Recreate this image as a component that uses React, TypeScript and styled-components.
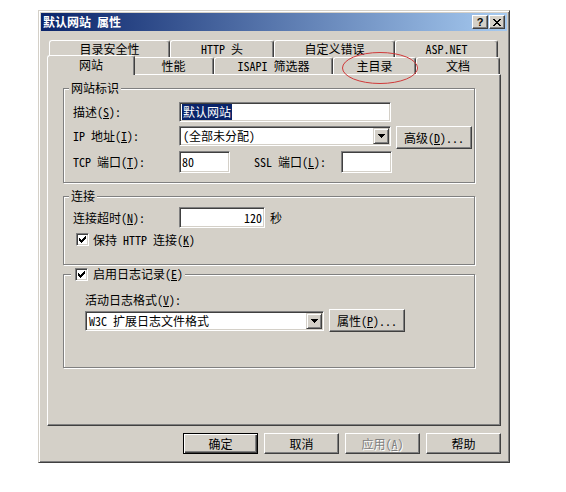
import React from 'react';
import styled, { createGlobalStyle, css } from 'styled-components';

const FACE = '#d4d0c8';
const FONT = `"Noto Sans Mono CJK SC", "Noto Sans CJK SC", "Liberation Sans", sans-serif`;

const GlobalStyle = createGlobalStyle`
  html, body { margin: 0; padding: 0; background: #fff; }
  body { font-family: ${FONT}; font-size: 12px; line-height: 14px; color: #000; }
`;

const Page = styled.div`
  width: 566px;
  height: 492px;
  box-sizing: border-box;
  padding: 10px 0 0 38px;
`;

const Dialog = styled.div`
  width: 472px;
  height: 453px;
  box-sizing: border-box;
  background: ${FACE};
  border: 1px solid;
  border-color: ${FACE} #404040 #404040 ${FACE};
  box-shadow: inset 1px 1px #fff, inset -1px -1px #808080;
  padding: 2px;
  display: flex;
  flex-direction: column;
`;

const TitleBar = styled.div`
  flex: none;
  height: 18px;
  display: flex;
  align-items: center;
  gap: 1px;
  padding-right: 2px;
  background: linear-gradient(to right, #0a246a, #a6caf0);
  color: #fff;
`;

const TitleText = styled.div`
  flex: 1;
  padding-left: 2px;
  font-weight: bold;
  line-height: 18px;
`;

const CaptionButton = styled.div`
  width: 16px;
  height: 14px;
  box-sizing: border-box;
  background: ${FACE};
  border: 1px solid;
  border-color: #fff #404040 #404040 #fff;
  box-shadow: inset -1px -1px #808080;
  display: flex;
  align-items: center;
  justify-content: center;
  color: #000;
  font-family: "Liberation Sans", sans-serif;
  font-weight: bold;
  font-size: 11px;
  line-height: 12px;
`;

const Body = styled.div`
  flex: 1;
  display: flex;
  flex-direction: column;
  padding: 9px 6px 6px;
`;

const TabStrip = styled.div`
  flex: none;
  height: 34px;
  display: flex;
  flex-direction: column;
`;

const TabRow = styled.div`
  height: 17px;
  display: flex;
  align-items: flex-start;
  padding-left: 2px;
`;

const Tab = styled.div<{ $w: number; $active?: boolean }>`
  position: relative;
  flex: none;
  width: ${p => p.$w}px;
  height: 17px;
  box-sizing: border-box;
  background: ${FACE};
  border-top: 1px solid #fff;
  border-left: 1px solid #fff;
  border-right: 1px solid #404040;
  border-radius: 3px 3px 0 0;
  box-shadow: inset -1px 0 #808080;
  display: flex;
  align-items: center;
  justify-content: center;
  white-space: nowrap;
  ${p =>
    p.$active &&
    css`
      width: ${p.$w + 4}px;
      height: 20px;
      margin: -2px -2px 0;
      padding-bottom: 1px;
      z-index: 2;
    `}
`;

const Ring = styled.svg`
  position: absolute;
  left: 6px;
  top: -8px;
  z-index: 3;
  overflow: visible;
  pointer-events: none;
`;

const Panel = styled.div`
  flex: none;
  height: 352px;
  box-sizing: border-box;
  border: 1px solid;
  border-color: #fff #404040 #404040 #fff;
  box-shadow: inset -1px -1px #808080;
  padding: 13px 25px 0 15px;
  display: flex;
  flex-direction: column;
`;

const Group = styled.div<{ $h: number; $mt?: number }>`
  position: relative;
  flex: none;
  height: ${p => p.$h}px;
  margin-top: ${p => p.$mt ?? 0}px;
  box-sizing: border-box;
  border: 1px solid #808080;
  box-shadow: inset 1px 1px #fff, 1px 1px #fff;
  display: flex;
  flex-direction: column;
`;

const Legend = styled.div<{ $left: number; $pl: number }>`
  position: absolute;
  top: -8px;
  left: ${p => p.$left}px;
  padding: 0 2px 0 ${p => p.$pl}px;
  background: ${FACE};
  display: flex;
  align-items: center;
  gap: 5px;
  white-space: nowrap;
`;

const GroupBody = styled.div<{ $pt: number; $pl: number }>`
  display: flex;
  flex-direction: column;
  padding: ${p => p.$pt}px 0 0 ${p => p.$pl}px;
`;

const Row = styled.div<{ $h: number; $mt?: number; $align?: string }>`
  display: flex;
  align-items: ${p => p.$align ?? 'center'};
  height: ${p => p.$h}px;
  margin-top: ${p => p.$mt ?? 0}px;
  white-space: nowrap;
`;

const Label = styled.span<{ $w?: number; $lh?: number; $ml?: number }>`
  flex: none;
  margin-left: ${p => p.$ml ?? 0}px;
  ${p => p.$w !== undefined && css`width: ${p.$w}px;`}
  ${p => p.$lh !== undefined && css`line-height: ${p.$lh}px;`}
`;

const U = styled.u`
  text-decoration: underline;
  text-underline-offset: 1px;
`;

const Field = styled.div<{ $w: number; $h: number; $right?: boolean; $ml?: number }>`
  flex: none;
  width: ${p => p.$w}px;
  height: ${p => p.$h}px;
  margin-left: ${p => p.$ml ?? 0}px;
  box-sizing: border-box;
  background: #fff;
  border: 1px solid;
  border-color: #808080 #fff #fff #808080;
  box-shadow: inset 1px 1px #404040, inset -1px -1px ${FACE};
  display: flex;
  align-items: center;
  justify-content: ${p => (p.$right ? 'flex-end' : 'flex-start')};
  padding: 0 2px;
  overflow: hidden;
`;

const ComboField = styled(Field)`
  padding: 1px 1px 1px 3px;
  align-items: stretch;
`;

const ComboText = styled.span`
  flex: 1;
  display: flex;
  align-items: center;
`;

const DropButton = styled.span`
  flex: none;
  width: 16px;
  box-sizing: border-box;
  background: ${FACE};
  border: 1px solid;
  border-color: ${FACE} #404040 #404040 ${FACE};
  box-shadow: inset 1px 1px #fff, inset -1px -1px #808080;
  display: flex;
  align-items: center;
  justify-content: center;
`;

const Selected = styled.span`
  background: #0a246a;
  color: #fff;
  padding: 1px 1px;
`;

const Button = styled.div<{ $w: number; $h: number; $ml?: number; $default?: boolean; $disabled?: boolean }>`
  flex: none;
  width: ${p => p.$w}px;
  height: ${p => p.$h}px;
  margin-left: ${p => p.$ml ?? 0}px;
  box-sizing: border-box;
  background: ${FACE};
  border: 1px solid;
  border-color: #fff #404040 #404040 #fff;
  box-shadow: inset -1px -1px #808080;
  display: flex;
  align-items: center;
  justify-content: center;
  white-space: nowrap;
  ${p =>
    p.$default &&
    css`
      border-color: #000;
      box-shadow: inset 1px 1px #fff, inset -1px -1px #404040, inset -2px -2px #808080;
    `}
  ${p =>
    p.$disabled &&
    css`
      color: #808080;
      text-shadow: 1px 1px #fff;
    `}
`;

const Unit = styled.span`
  margin-left: 5px;
`;

const CheckRow = styled.label<{ $mt?: number; $ml?: number }>`
  display: flex;
  align-items: center;
  gap: 4px;
  height: 13px;
  margin-top: ${p => p.$mt ?? 0}px;
  margin-left: ${p => p.$ml ?? 0}px;
  white-space: nowrap;
`;

const CheckBox = styled.span`
  flex: none;
  width: 13px;
  height: 13px;
  box-sizing: border-box;
  background: #fff;
  border: 1px solid;
  border-color: #808080 #fff #fff #808080;
  box-shadow: inset 1px 1px #404040, inset -1px -1px ${FACE};
  display: inline-flex;
  align-items: center;
  justify-content: center;
`;

const ButtonBar = styled.div`
  flex: none;
  display: flex;
  justify-content: flex-end;
  gap: 6px;
  margin-top: 7px;
`;

const CHECK = [
  [6], [5, 6], [0, 4, 5, 6], [0, 1, 3, 4, 5], [0, 1, 2, 3, 4], [1, 2, 3], [2],
];

const CheckMark = () => (
  <svg width="7" height="7" viewBox="0 0 7 7" shapeRendering="crispEdges">
    {CHECK.flatMap((cols, y) => cols.map(x => <rect key={`${x}-${y}`} x={x} y={y} width="1" height="1" fill="#000" />))}
  </svg>
);

const Check = () => (
  <CheckBox>
    <CheckMark />
  </CheckBox>
);

const CloseGlyph = () => (
  <svg width="8" height="7" viewBox="0 0 8 7" shapeRendering="crispEdges">
    {[
      [0, 1, 6, 7], [1, 2, 5, 6], [2, 3, 4, 5], [3, 4], [2, 3, 4, 5], [1, 2, 5, 6], [0, 1, 6, 7],
    ].flatMap((cols, y) => cols.map(x => <rect key={`${x}-${y}`} x={x} y={y} width="1" height="1" fill="#000" />))}
  </svg>
);

const Arrow = () => (
  <svg width="7" height="4" viewBox="0 0 7 4" shapeRendering="crispEdges">
    <path d="M0 0h7v1h-1v1h-1v1h-1v1h-1v-1h-1v-1h-1v-1h-1z" fill="#000" />
  </svg>
);

const Combo = ({ w, h, text }: { w: number; h: number; text: string }) => (
  <ComboField $w={w} $h={h}>
    <ComboText>{text}</ComboText>
    <DropButton>
      <Arrow />
    </DropButton>
  </ComboField>
);

export default function App() {
  return (
    <>
      <GlobalStyle />
      <Page>
        <Dialog>
          <TitleBar>
            <TitleText>默认网站 属性</TitleText>
            <CaptionButton>?</CaptionButton>
            <CaptionButton>
              <CloseGlyph />
            </CaptionButton>
          </TitleBar>
          <Body>
            <TabStrip>
              <TabRow>
                <Tab $w={121}>目录安全性</Tab>
                <Tab $w={104}>HTTP 头</Tab>
                <Tab $w={121}>自定义错误</Tab>
                <Tab $w={103}>ASP.NET</Tab>
              </TabRow>
              <TabRow>
                <Tab $w={84} $active>网站</Tab>
                <Tab $w={81}>性能</Tab>
                <Tab $w={119}>ISAPI 筛选器</Tab>
                <Tab $w={83}>
                  主目录
                  <Ring width="80" height="36" viewBox="0 0 80 36">
                    <ellipse cx="40" cy="18" rx="37.5" ry="15.5" fill="none" stroke="#d03a3a" strokeWidth="1" />
                  </Ring>
                </Tab>
                <Tab $w={84}>文档</Tab>
              </TabRow>
            </TabStrip>
            <Panel>
              <Group $h={95}>
                <Legend $left={5} $pl={2}>网站标识</Legend>
                <GroupBody $pt={13} $pl={9}>
                  <Row $h={20}>
                    <Label $w={106}>
                      描述(<U>S</U>):
                    </Label>
                    <Field $w={212} $h={20}>
                      <Selected>默认网站</Selected>
                    </Field>
                  </Row>
                  <Row $h={23} $mt={4} $align="flex-start">
                    <Label $w={106} $lh={20}>
                      IP 地址(<U>I</U>):
                    </Label>
                    <Combo w={212} h={20} text="(全部未分配)" />
                    <Button $w={76} $h={23} $ml={5}>
                      高级(<U>D</U>)...
                    </Button>
                  </Row>
                  <Row $h={22} $mt={2}>
                    <Label $w={106}>
                      TCP 端口(<U>T</U>):
                    </Label>
                    <Field $w={51} $h={22}>80</Field>
                    <Label $w={87} $ml={24}>
                      SSL 端口(<U>L</U>):
                    </Label>
                    <Field $w={51} $h={22} />
                  </Row>
                </GroupBody>
              </Group>

              <Group $h={69} $mt={13}>
                <Legend $left={5} $pl={2}>连接</Legend>
                <GroupBody $pt={10} $pl={9}>
                  <Row $h={21}>
                    <Label $w={106}>
                      连接超时(<U>N</U>):
                    </Label>
                    <Field $w={86} $h={21} $right>120</Field>
                    <Unit>秒</Unit>
                  </Row>
                  <CheckRow $mt={5} $ml={3}>
                    <Check />
                    <span>
                      保持 HTTP 连接(<U>K</U>)
                    </span>
                  </CheckRow>
                </GroupBody>
              </Group>

              <Group $h={94} $mt={9}>
                <Legend $left={7} $pl={4}>
                  <Check />
                  <span>
                    启用日志记录(<U>E</U>)
                  </span>
                </Legend>
                <GroupBody $pt={18} $pl={21}>
                  <Label>
                    活动日志格式(<U>V</U>):
                  </Label>
                  <Row $h={23} $mt={2}>
                    <Combo w={239} h={20} text="W3C 扩展日志文件格式" />
                    <Button $w={76} $h={23} $ml={5}>
                      属性(<U>P</U>)...
                    </Button>
                  </Row>
                </GroupBody>
              </Group>
            </Panel>
            <ButtonBar>
              <Button $w={75} $h={21} $default>确定</Button>
              <Button $w={75} $h={21}>取消</Button>
              <Button $w={75} $h={21} $disabled>
                应用(<U>A</U>)
              </Button>
              <Button $w={75} $h={21}>帮助</Button>
            </ButtonBar>
          </Body>
        </Dialog>
      </Page>
    </>
  );
}
